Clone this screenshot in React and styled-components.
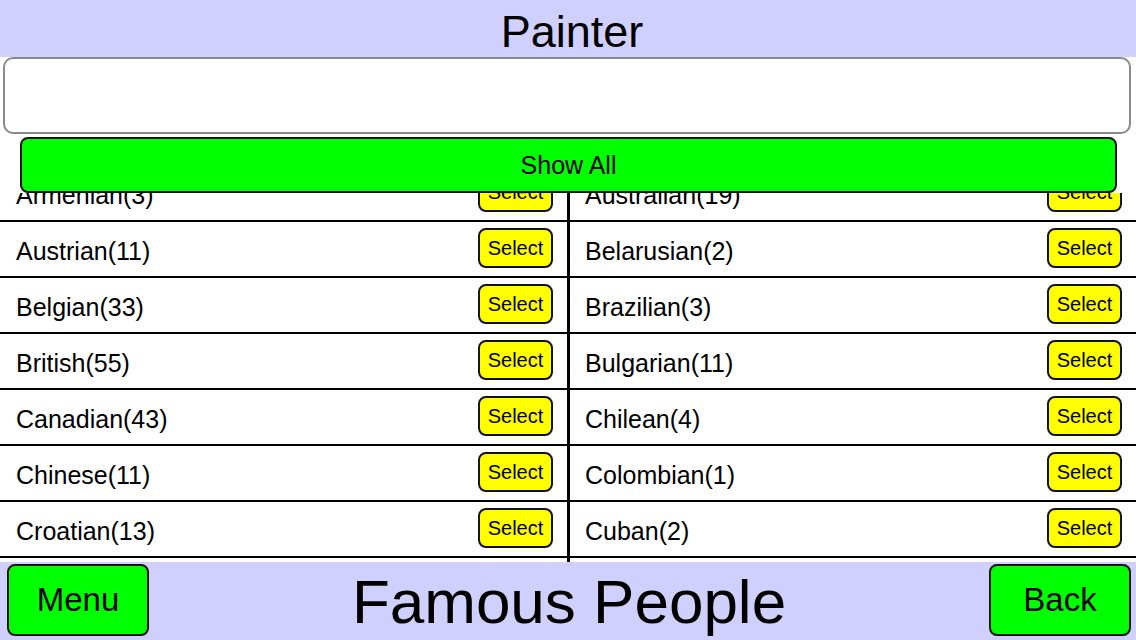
import React from "react";
import styled, { createGlobalStyle } from "styled-components";

const GlobalStyle = createGlobalStyle`
  html, body {
    margin: 0;
    padding: 0;
    background: #ffffff;
    font-family: "Liberation Sans", Arial, Helvetica, sans-serif;
    color: #000;
  }
  * { box-sizing: border-box; }
`;

const Screen = styled.div`
  width: 1136px;
  height: 640px;
  display: flex;
  flex-direction: column;
  overflow: hidden;
  background: #ffffff;
`;

const Header = styled.header`
  height: 57px;
  padding-top: 6px;
  background: #d0d0ff;
  text-align: center;
  font-size: 45px;
  line-height: 51px;
  padding-left: 8px;
`;

const SearchField = styled.input`
  display: block;
  height: 77px;
  margin: 0 5px 0 3px;
  border: 2px solid #8a8a8a;
  border-radius: 10px;
  background: #fff;
  outline: none;
  padding: 0 12px;
  font-family: inherit;
  font-size: 25px;
`;

const ShowAllButton = styled.button`
  display: block;
  height: 56px;
  margin: 3px 19px 0 20px;
  border: 2px solid #111;
  border-radius: 8px;
  background: #00ff00;
  font-family: inherit;
  font-size: 25px;
  color: #000;
  padding: 0;
  z-index: 1;
`;

const ListViewport = styled.div`
  flex: 1;
  min-height: 0;
  display: flex;
  overflow: hidden;
`;

const Column = styled.div`
  width: ${(p) => p.$width};
  flex: ${(p) => (p.$grow ? 1 : "none")};
  margin-top: -27px;
  display: flex;
  flex-direction: column;
`;

const Divider = styled.div`
  width: 3px;
  flex: none;
  background: #000;
`;

const Row = styled.div`
  height: 56px;
  flex: none;
  display: flex;
  align-items: center;
  justify-content: space-between;
  padding: 0 14px 0 ${(p) => p.$inset}px;
  border-bottom: 2px solid #000;
`;

const Label = styled.span`
  font-size: 25px;
  padding-top: 5px;
`;

const SelectButton = styled.button`
  width: 75px;
  height: 40px;
  margin-bottom: 2px;
  border: 2px solid #111;
  border-radius: 8px;
  background: #ffff00;
  font-family: inherit;
  font-size: 20px;
  color: #000;
  padding: 0;
`;

const Footer = styled.footer`
  height: 78px;
  flex: none;
  background: #d0d0ff;
  display: grid;
  grid-template-columns: 142px 1fr 142px;
  align-items: start;
  padding: 2px 5px 4px 7px;
`;

const NavButton = styled.button`
  height: 72px;
  border: 2px solid #111;
  border-radius: 8px;
  background: #00ff00;
  font-family: inherit;
  font-size: 33px;
  color: #000;
  padding: 0;
`;

const AppTitle = styled.div`
  text-align: center;
  font-size: 62px;
  line-height: 70px;
  padding-top: 3px;
`;

const left = [
  "Armenian(3)",
  "Austrian(11)",
  "Belgian(33)",
  "British(55)",
  "Canadian(43)",
  "Chinese(11)",
  "Croatian(13)",
  "Czech(9)",
];
const right = [
  "Australian(19)",
  "Belarusian(2)",
  "Brazilian(3)",
  "Bulgarian(11)",
  "Chilean(4)",
  "Colombian(1)",
  "Cuban(2)",
  "Danish(8)",
];

export default function App() {
  return (
    <>
      <GlobalStyle />
      <Screen>
        <Header>Painter</Header>
        <SearchField type="text" />
        <ShowAllButton>Show All</ShowAllButton>
        <ListViewport>
          <Column $width="567px">
            {left.map((n) => (
              <Row key={n} $inset={16}>
                <Label>{n}</Label>
                <SelectButton>Select</SelectButton>
              </Row>
            ))}
          </Column>
          <Divider />
          <Column $grow>
            {right.map((n) => (
              <Row key={n} $inset={15}>
                <Label>{n}</Label>
                <SelectButton>Select</SelectButton>
              </Row>
            ))}
          </Column>
        </ListViewport>
        <Footer>
          <NavButton>Menu</NavButton>
          <AppTitle>Famous People</AppTitle>
          <NavButton>Back</NavButton>
        </Footer>
      </Screen>
    </>
  );
}
